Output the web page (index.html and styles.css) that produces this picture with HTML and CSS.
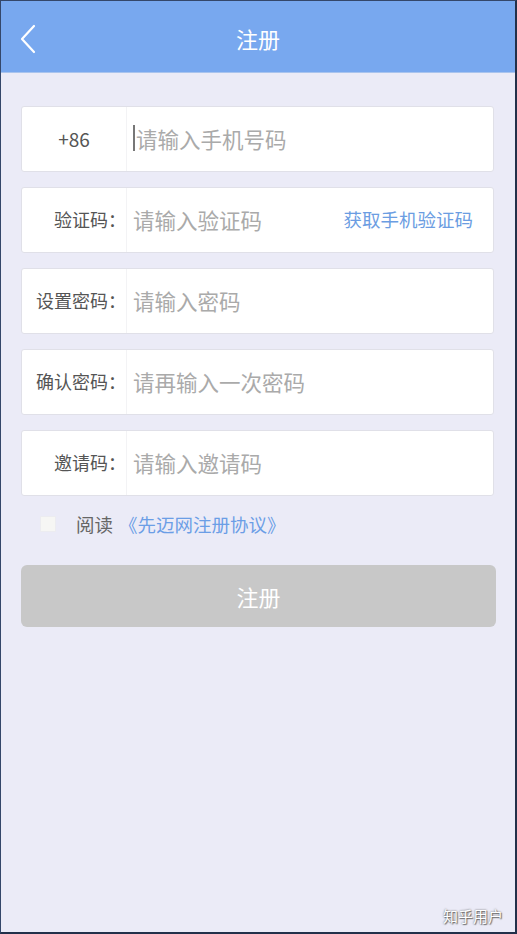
FILE: index.html
```html
<!DOCTYPE html>
<html lang="zh-CN">
<head>
  <meta charset="UTF-8">
  <meta name="viewport" content="width=device-width, initial-scale=1.0">
  <title>注册</title>
  <link rel="stylesheet" href="styles.css">
</head>
<body>

  <div class="screen">
    <div class="header">
      <div class="back-btn">
        <svg width="18" height="30" viewBox="0 0 18 30">
          <polyline points="15,2 3,15 15,28" fill="none" stroke="white" stroke-width="2.2" stroke-linecap="round" stroke-linejoin="round"/>
        </svg>
      </div>
      <div class="title">注册</div>
      <div class="header-space"></div>
    </div>

    <div class="form">
      <div class="field">
        <div class="label center">+86</div>
        <div class="input"><span class="caret"></span>请输入手机号码</div>
      </div>

      <div class="field">
        <div class="label">验证码：</div>
        <div class="input">请输入验证码</div>
        <div class="get-code">获取手机验证码</div>
      </div>

      <div class="field">
        <div class="label">设置密码：</div>
        <div class="input">请输入密码</div>
      </div>

      <div class="field">
        <div class="label">确认密码：</div>
        <div class="input">请再输入一次密码</div>
      </div>

      <div class="field">
        <div class="label">邀请码：</div>
        <div class="input">请输入邀请码</div>
      </div>

      <div class="agree">
        <span class="checkbox"></span>
        <span class="agree-text">阅读</span>
        <span class="agree-link">《先迈网注册协议》</span>
      </div>

      <button class="submit">注册</button>
    </div>

    <div class="watermark">知乎用户</div>
  </div>

</body>
</html>
```

FILE: styles.css
```css
body {
  margin: 0;
  padding: 0;
  font-family: "Noto Sans CJK SC", "Noto Sans", sans-serif;
}

.screen {
  position: relative;
  width: 517px;
  height: 934px;
  box-sizing: border-box;
  background: #ebebf7;
  border-top: 1px solid #34476a;
  border-left: 1px solid #34476a;
  border-right: 2px solid #22304a;
  border-bottom: 2px solid #22304a;
  overflow: hidden;
}

.header {
  height: 71px;
  background: #78a8ef;
  display: flex;
  align-items: center;
  justify-content: space-between;
  padding: 0 18px;
  border-bottom: 1px solid #a9c4ee;
}

.back-btn {
  width: 40px;
  display: flex;
  align-items: center;
  margin-top: 4px;
}

.header-space {
  width: 40px;
}

.title {
  color: white;
  font-size: 22px;
  margin-top: 2px;
}

.form {
  padding: 33px 21px 0 20px;
  display: flex;
  flex-direction: column;
}

.field {
  height: 64px;
  background: white;
  border: 1px solid #e0e0e8;
  border-radius: 3px;
  display: flex;
  align-items: center;
  margin-bottom: 15px;
}

.label {
  width: 105px;
  height: 100%;
  box-sizing: border-box;
  display: flex;
  align-items: center;
  justify-content: flex-end;
  border-right: 1px solid #f3f3f5;
  color: #555;
  font-size: 18px;
  padding-bottom: 2px;
}

.label.center {
  justify-content: center;
  font-size: 19px;
}

.input {
  flex: 1;
  padding-left: 6px;
  color: #aaa;
  font-size: 21.5px;
  display: flex;
  align-items: center;
  padding-bottom: 2px;
}

.caret {
  display: inline-block;
  width: 2px;
  height: 26px;
  background: #777;
  margin-right: 1px;
}

.get-code {
  color: #6b9de2;
  font-size: 18.5px;
  padding-right: 20px;
  padding-bottom: 2px;
}

.agree {
  display: flex;
  align-items: center;
  height: 30px;
  margin-top: -2px;
  padding-left: 19px;
  font-size: 18.5px;
}

.checkbox {
  width: 14px;
  height: 14px;
  background: #f6f6f4;
  border: 1px solid #ececf0;
  margin-right: 20px;
}

.agree-text {
  color: #666;
  margin-right: 6px;
}

.agree-link {
  color: #6b9ee6;
}

.submit {
  margin-top: 26px;
  height: 62px;
  width: 475px;
  border: none;
  border-radius: 6px;
  background: #c8c8c8;
  color: white;
  font-family: inherit;
  font-size: 22px;
  padding-bottom: 2px;
}

.watermark {
  position: absolute;
  right: 12px;
  bottom: 6px;
  color: white;
  font-size: 15px;
  text-shadow: 0 0 2px #555, 1px 1px 1px #777;
}
```
